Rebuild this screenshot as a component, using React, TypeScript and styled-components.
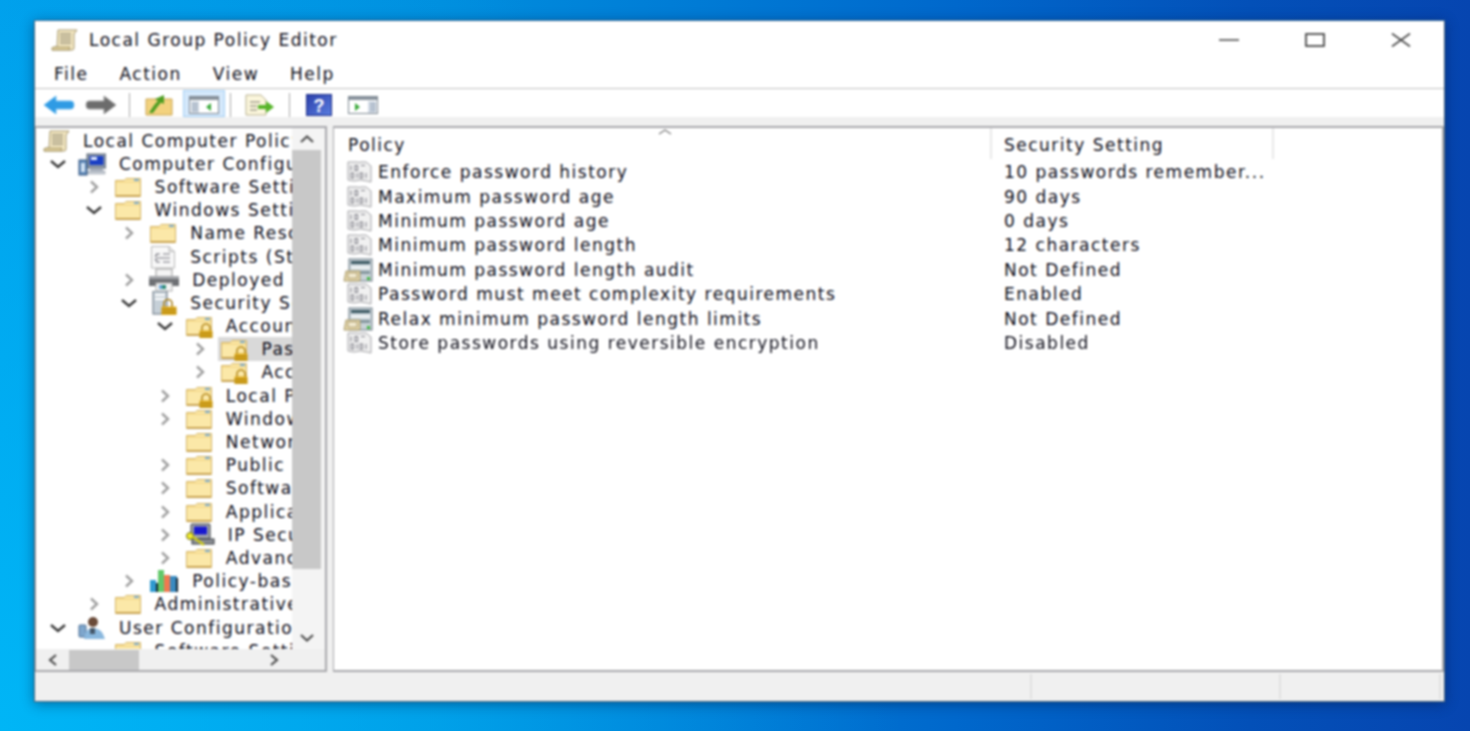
import React from 'react';
import styled, { createGlobalStyle } from 'styled-components';

const GlobalStyle = createGlobalStyle`
  html, body {
    margin: 0;
    padding: 0;
    overflow: hidden;
  }
  * {
    box-sizing: border-box;
  }
`;

const Desktop = styled.div`
  width: 1470px;
  height: 731px;
  padding: 20px 25px 29px 34px;
  background:
    radial-gradient(circle at 0 100%, rgba(0, 190, 250, 0.75), rgba(0, 190, 250, 0) 55%),
    linear-gradient(90deg, #009cea 0%, #008ede 30%, #0068cc 65%, #0350b8 85%, #0645b0 100%);
  font-family: 'DejaVu Sans', 'Noto Sans', sans-serif;
  color: #0c0c18;
`;

const Window = styled.div`
  width: 1411px;
  height: 682px;
  display: flex;
  flex-direction: column;
  background: #f0f0f0;
  border: 1px solid #4a6478;
  border-top-color: #3f6f96;
  box-shadow: 0 2px 12px rgba(0, 20, 60, 0.45);
  filter: blur(0.85px);
`;

const TitleBar = styled.div`
  height: 38px;
  flex: none;
  display: flex;
  align-items: center;
  padding-left: 15px;
  background: #fff;
`;

const TitleText = styled.span`
  margin-left: 11px;
  font-size: 17px;
  line-height: 20px;
  letter-spacing: 1.5px;
`;

const WindowControls = styled.div`
  margin-left: auto;
  display: flex;
  align-items: center;
  gap: 66px;
  padding-right: 33px;
`;

const MenuBar = styled.div`
  height: 30px;
  flex: none;
  display: flex;
  align-items: center;
  gap: 31px;
  padding: 0 0 0 19px;
  background: #fff;
  border-bottom: 1px solid #c0c0c0;
`;

const MenuItem = styled.span`
  font-size: 17px;
  line-height: 20px;
  letter-spacing: 1.5px;
`;

const Toolbar = styled.div`
  height: 28px;
  flex: none;
  display: flex;
  align-items: flex-end;
  padding-left: 6px;
  background: #fff;
`;

const ToolButton = styled.div<{ $w: number; $active?: boolean }>`
  width: ${(p) => p.$w}px;
  height: 27px;
  display: flex;
  align-items: center;
  justify-content: center;
  padding-top: 3px;
  background: ${(p) => (p.$active ? '#d4e8fb' : 'transparent')};
  border: 1px solid ${(p) => (p.$active ? '#a6d0f5' : 'transparent')};
`;

const ToolSep = styled.div`
  width: 1px;
  height: 24px;
  margin: 0 5px;
  background: #a8a8a8;
`;

const Band = styled.div`
  height: 9px;
  flex: none;
`;

const Panes = styled.div`
  flex: 1;
  min-height: 0;
  display: flex;
  gap: 6px;
`;

const TreePane = styled.div`
  width: 292px;
  flex: none;
  display: flex;
  flex-direction: column;
  background: #fff;
  border: 1px solid #a8a8ac;
  border-width: 2px 2px 2px 1px;
`;

const TreeBody = styled.div`
  flex: 1;
  min-height: 0;
  display: flex;
`;

const TreeClip = styled.div`
  width: 256px;
  flex: none;
  overflow: hidden;
  padding-top: 1px;
`;

const Row = styled.div<{ $depth: number }>`
  height: 23.2px;
  display: flex;
  align-items: center;
  white-space: nowrap;
  padding-left: ${(p) => (p.$depth < 0 ? 4 : 12 + p.$depth * 35.6)}px;
`;

const ChevronSlot = styled.div`
  width: 20px;
  margin-right: 8px;
  flex: none;
  display: flex;
  justify-content: center;
`;

const TreeItem = styled.div<{ $selected?: boolean }>`
  height: 24px;
  flex: none;
  display: flex;
  align-items: center;
  gap: 13px;
  padding-left: 2px;
  background: ${(p) => (p.$selected ? '#d9d9d9' : 'transparent')};

  svg {
    flex: none;
  }
`;

const TreeLabel = styled.span`
  font-size: 17px;
  line-height: 20px;
  letter-spacing: 1.5px;
`;

const VScroll = styled.div`
  flex: 1;
  display: flex;
  flex-direction: column;
  background: #f4f4f4;
  padding-right: 4px;
`;

const ScrollArrow = styled.div`
  height: 22px;
  width: 100%;
  flex: none;
  display: flex;
  align-items: center;
  justify-content: center;
`;

const VThumb = styled.div`
  height: 419px;
  flex: none;
  background: #c8c8c8;
`;

const VGap = styled.div`
  flex: 1;
  display: flex;
  align-items: flex-end;
`;

const HScroll = styled.div`
  height: 21px;
  flex: none;
  display: flex;
  align-items: center;
  background: #f0f0f0;
`;

const HArrow = styled.div`
  width: 33px;
  flex: none;
  display: flex;
  justify-content: center;
`;

const HThumb = styled.div`
  width: 70px;
  height: 20px;
  flex: none;
  background: #c8c8c8;
`;

const HGap = styled.div`
  width: 119px;
  flex: none;
`;

const ListPane = styled.div`
  flex: 1;
  min-width: 0;
  background: #fff;
  border: 1px solid #a8a8ac;
  border-width: 2px 2px 2px 1px;
`;

const HeaderRow = styled.div`
  height: 31px;
  display: grid;
  grid-template-columns: 658px 282px;
`;

const HeaderCell = styled.div<{ $pad: number }>`
  position: relative;
  display: flex;
  align-items: center;
  padding: 2px 0 0 ${(p) => p.$pad}px;
  font-size: 17px;
  line-height: 20px;
  letter-spacing: 1.5px;
  border-right: 2px solid #e8e8e8;
`;

const SortCaret = styled.svg`
  position: absolute;
  top: 1px;
  left: 324px;
`;

const ListBody = styled.div`
  display: flex;
  flex-direction: column;
  padding-top: 1px;
`;

const PolicyRow = styled.div`
  height: 24.4px;
  display: grid;
  grid-template-columns: 658px 1fr;
  align-items: center;
  font-size: 17px;
  line-height: 20px;
  letter-spacing: 1.5px;
  white-space: nowrap;
`;

const PolicyName = styled.div`
  display: flex;
  align-items: center;
  gap: 5px;
  padding-left: 9px;
`;

const PolicyIconSlot = styled.div`
  width: 30px;
  height: 24px;
  flex: none;
  display: flex;
  justify-content: flex-end;
`;

const PolicyValue = styled.div`
  padding-left: 12px;
`;

const StatusBar = styled.div`
  height: 29px;
  flex: none;
  display: flex;
  justify-content: flex-end;
  padding: 2px 3px 2px 0;
`;

const StatusCell = styled.div<{ $w: number }>`
  width: ${(p) => p.$w}px;
  border-left: 2px solid #e0e0e0;
`;

const Folder = ({ lock }: { lock?: boolean }) => (
  <svg width="28" height="24" viewBox="0 0 28 24">
    <path d="M1.5 5.5 V21.5 H26.5 V3.5 H12 L10 5.5 Z" fill="#fbe8a8" stroke="#d4b362" />
    <path d="M2 20 H26 V22 H2 Z" fill="#c9a453" />
    <path d="M2 6 H26 V8 H2 Z" fill="#f6dc92" />
    <rect x="20" y="4" width="5" height="2" fill="#7fb2d8" />
    {lock && (
      <g>
        <path d="M17 17 V14 a4 4 0 0 1 8 0 V17" fill="none" stroke="#b58a1e" strokeWidth="1.6" />
        <rect x="14.5" y="16.5" width="13" height="7.5" fill="#dba920" />
        <rect x="14.5" y="19" width="13" height="1" fill="#a8800f" />
        <rect x="14.5" y="22" width="13" height="1" fill="#a8800f" />
      </g>
    )}
  </svg>
);

const Scroll = () => (
  <svg width="28" height="24" viewBox="0 0 28 24">
    <path d="M8 2 H27 L24 6 V20 Q24 22 22 22 H2 Q4 21 4 19 H7 Z" fill="#f2e6c0" stroke="#a89a70" />
    <path d="M2 22 Q1 19 4 19 H20 Q18 21 20 22 Z" fill="#e3d29c" stroke="#a89a70" />
    <path d="M10 6 H21 M10 9 H21 M10 12 H21 M10 15 H21" stroke="#77705c" strokeWidth="1.2" />
  </svg>
);

const ComputerIcon = () => (
  <svg width="28" height="24" viewBox="0 0 28 24">
    <rect x="9" y="2" width="19" height="14" fill="#8c98a6" stroke="#5a6676" />
    <rect x="11.5" y="4" width="14" height="9" fill="#1a3fc4" />
    <rect x="13" y="5" width="6" height="3" fill="#e6eefc" />
    <rect x="12" y="16" width="13" height="3" fill="#a8b0bc" />
    <rect x="9" y="19" width="18" height="3" fill="#c6ccd4" stroke="#8a94a0" strokeWidth="0.5" />
    <rect x="1" y="8" width="8" height="15" fill="#5f88b8" stroke="#3a5a82" />
    <rect x="3" y="11" width="4" height="9" fill="#cfe0f2" />
  </svg>
);

const ScriptsIcon = () => (
  <svg width="28" height="24" viewBox="0 0 28 24">
    <path d="M2.5 1.5 H20 L25.5 6.5 V23 H2.5 Z" fill="#f8f8f8" stroke="#b8b8b8" />
    <path d="M20 1.5 V6.5 H25.5" fill="#e4e4e4" stroke="#b8b8b8" />
    <path d="M7 9 H11 M14 9 H21 M6 11.5 L8 9.5 M7 13 H21 M7 17 H11 M14 17 H21 M6 14 L8 16" stroke="#6e6e78" strokeWidth="1.1" fill="none" />
  </svg>
);

const PrinterIcon = () => (
  <svg width="30" height="24" viewBox="0 0 30 24">
    <rect x="7" y="1" width="16" height="8" fill="#f4f4f4" stroke="#9a9a9a" />
    <rect x="0" y="8" width="30" height="10" fill="#6e7074" />
    <rect x="0" y="8" width="30" height="3" fill="#a4a6aa" />
    <rect x="7" y="15" width="16" height="8" fill="#f4f4f4" stroke="#b0b0b0" />
    <rect x="13" y="17" width="4" height="4" fill="#2e8a78" />
    <rect x="10" y="17" width="3" height="4" fill="#6ca6d8" />
  </svg>
);

const SecurityIcon = () => (
  <svg width="28" height="24" viewBox="0 0 28 24">
    <rect x="4" y="0" width="14" height="23" fill="#c6d0d8" stroke="#66727e" />
    <rect x="6" y="3" width="10" height="2" fill="#fff" />
    <rect x="6" y="7" width="10" height="2" fill="#fff" />
    <path d="M15 16 V12.5 a4 4 0 0 1 8 0 V16" fill="none" stroke="#a8801c" strokeWidth="1.6" />
    <rect x="12.5" y="15.5" width="15" height="8.5" fill="#dba920" />
    <rect x="12.5" y="18" width="15" height="1" fill="#a8800f" />
    <rect x="12.5" y="21" width="15" height="1" fill="#a8800f" />
  </svg>
);

const IpSecIcon = () => (
  <svg width="30" height="24" viewBox="0 0 30 24">
    <rect x="6" y="1" width="19" height="15" rx="1" fill="#a0a4aa" stroke="#33363c" />
    <rect x="9" y="3.5" width="13" height="8" fill="#1818d0" />
    <rect x="7" y="16" width="22" height="5" fill="#8c9096" stroke="#33363c" />
    <circle cx="5" cy="13" r="3.5" fill="#f0ec30" stroke="#6e6a10" />
    <path d="M8 14 L19 22" stroke="#e8e420" strokeWidth="2.4" />
    <path d="M8 14 L19 22" stroke="#6e6a10" strokeWidth="0.5" />
  </svg>
);

const ChartIcon = () => (
  <svg width="30" height="24" viewBox="0 0 30 24">
    <rect x="1" y="11" width="6" height="12" fill="#2f9ad0" />
    <rect x="7" y="14" width="2" height="9" fill="#16262e" />
    <rect x="9" y="1" width="6" height="22" fill="#62c86a" />
    <rect x="15" y="6" width="6" height="17" fill="#f07a50" />
    <rect x="21" y="7" width="7" height="16" fill="#3a8ac0" />
    <rect x="27" y="9" width="2" height="14" fill="#142430" />
  </svg>
);

const UserIcon = () => (
  <svg width="28" height="24" viewBox="0 0 28 24">
    <rect x="1" y="9" width="7" height="12" rx="1" fill="#7ea6cc" stroke="#4c6f94" />
    <circle cx="15" cy="6" r="5" fill="#6a4a38" />
    <path d="M6 23 Q7 12 15 12 Q24 12 27 23 Z" fill="#8ab8de" />
    <rect x="12" y="12" width="5" height="6" fill="#45586a" />
  </svg>
);

const BinaryDoc = () => (
  <svg width="27" height="24" viewBox="0 0 27 24">
    <path d="M2 2 H11 Q13 3 15 2 H20 L25 6 V22 L21 21 Q14 19 8 21 L2 20 Z" fill="#f1f1f1" stroke="#a4a4a8" />
    <path d="M5 5.5 V10.5 M9 5.5 H11.5 V10.5 H9 Z M5 13 H7.5 V18 H5 Z M11 13 V18 M14 13 H16.5 V18 H14 Z M20 13 V18 M15 5.5 H19" fill="none" stroke="#84848c" strokeWidth="1.1" />
  </svg>
);

const ServerDoc = () => (
  <svg width="30" height="24" viewBox="0 0 30 24">
    <rect x="6" y="1" width="23" height="22" fill="#c8d2d8" stroke="#6c7a84" />
    <rect x="8" y="3" width="19" height="3" fill="#3d5a64" />
    <rect x="8" y="8" width="19" height="3" fill="#eef2f4" />
    <rect x="8" y="13" width="19" height="3" fill="#86989f" />
    <rect x="24" y="19" width="3" height="3" fill="#3fb83f" />
    <path d="M3 13 H17 V23 H1 Z" fill="#e4d6a8" stroke="#a89a70" />
    <rect x="5" y="15" width="9" height="5" fill="#f4ecd2" stroke="#b0a27a" />
  </svg>
);

const Chevron = ({ open, dark }: { open?: boolean; dark?: boolean }) =>
  open ? (
    <svg width="18" height="10" viewBox="0 0 18 10">
      <path d="M2 2 L9 8 L16 2" fill="none" stroke="#3a3a3a" strokeWidth="2.4" />
    </svg>
  ) : (
    <svg width="10" height="14" viewBox="0 0 10 14">
      <path d="M2 1.5 L8 7 L2 12.5" fill="none" stroke={dark ? '#3a3a3a' : '#a0a0a0'} strokeWidth="2.4" />
    </svg>
  );

const ScrollUp = () => (
  <svg width="14" height="8" viewBox="0 0 14 8">
    <path d="M1 7 L7 1.5 L13 7" fill="none" stroke="#505050" strokeWidth="2.2" />
  </svg>
);

const ScrollDown = () => (
  <svg width="14" height="8" viewBox="0 0 14 8">
    <path d="M1 1 L7 6.5 L13 1" fill="none" stroke="#505050" strokeWidth="2.2" />
  </svg>
);

const ScrollLeft = () => (
  <svg width="9" height="12" viewBox="0 0 9 12">
    <path d="M8 1 L2 6 L8 11" fill="none" stroke="#505050" strokeWidth="2.2" />
  </svg>
);

const ScrollRight = () => (
  <svg width="9" height="12" viewBox="0 0 9 12">
    <path d="M1 1 L7 6 L1 11" fill="none" stroke="#505050" strokeWidth="2.2" />
  </svg>
);

const BackArrow = () => (
  <svg width="32" height="20" viewBox="0 0 32 20">
    <path d="M1 10 L13 1 V6 H28 Q31 6 31 10 Q31 14 28 14 H13 V19 Z" fill="#2f9be4" stroke="#6fbcf0" />
  </svg>
);

const ForwardArrow = () => (
  <svg width="32" height="20" viewBox="0 0 32 20">
    <path d="M31 10 L19 1 V6 H4 Q1 6 1 10 Q1 14 4 14 H19 V19 Z" fill="#6c6c6c" stroke="#a0a0a0" />
  </svg>
);

const UpFolder = () => (
  <svg width="28" height="22" viewBox="0 0 28 22">
    <path d="M1 5 H27 V21 H1 Z" fill="#f3d27e" stroke="#c9a453" />
    <path d="M4 19 Q10 9 13 7 L10 5 L19 1 L19 10 L16 8.5 Q12 13 8 19 Z" fill="#4f9e22" />
  </svg>
);

const PaneIcon = ({ flip }: { flip?: boolean }) => (
  <svg width="30" height="18" viewBox="0 0 30 18">
    <rect x="0.5" y="0.5" width="29" height="17" fill="#fff" stroke="#7c8690" />
    <rect x="1" y="1" width="28" height="3" fill="#8a949e" />
    <rect x={flip ? 20 : 2} y="5" width="8" height="12" fill="#d4dce6" />
    <path d={flip ? 'M22 8 H28 M22 11 H28 M22 14 H28' : 'M3 8 H9 M3 11 H9 M3 14 H9'} stroke="#7c8ea4" strokeWidth="1" />
    <path d={flip ? 'M7 7 L12 11 L7 15 Z' : 'M22 7 L17 11 L22 15 Z'} fill="#3aa83a" />
  </svg>
);

const ExportIcon = () => (
  <svg width="30" height="22" viewBox="0 0 30 22">
    <path d="M1 1 H16 L21 6 V21 H1 Z" fill="#fbf6dc" stroke="#b8b090" />
    <path d="M5 8 H15 M5 12 H12 M5 16 H12" stroke="#787466" strokeWidth="1.2" />
    <path d="M13 11 H21 V7 L29 13 L21 19 V15 H13 Z" fill="#57b52a" />
  </svg>
);

const HelpIcon = () => (
  <svg width="26" height="22" viewBox="0 0 26 22">
    <defs>
      <linearGradient id="helpFill" x1="0" y1="0" x2="1" y2="1">
        <stop offset="0" stopColor="#2b3faa" />
        <stop offset="1" stopColor="#5a7ee0" />
      </linearGradient>
    </defs>
    <rect x="0.5" y="0.5" width="25" height="21" fill="url(#helpFill)" stroke="#1e2e86" />
    <text x="13" y="18" textAnchor="middle" fontSize="18" fontWeight="700" fontFamily="Liberation Sans, sans-serif" fill="#fff">
      ?
    </text>
  </svg>
);

const treeRows = [
  { depth: -1, icon: <Scroll />, label: 'Local Computer Policy' },
  { depth: 0, open: true, dark: true, icon: <ComputerIcon />, label: 'Computer Configuration' },
  { depth: 1, chevron: true, icon: <Folder />, label: 'Software Settings' },
  { depth: 1, open: true, icon: <Folder />, label: 'Windows Settings' },
  { depth: 2, chevron: true, icon: <Folder />, label: 'Name Resolution Policy' },
  { depth: 2, icon: <ScriptsIcon />, label: 'Scripts (Startup/Shutdown)' },
  { depth: 2, chevron: true, icon: <PrinterIcon />, label: 'Deployed Printers' },
  { depth: 2, open: true, icon: <SecurityIcon />, label: 'Security Settings' },
  { depth: 3, open: true, icon: <Folder lock />, label: 'Account Policies' },
  { depth: 4, chevron: true, selected: true, icon: <Folder lock />, label: 'Password Policy' },
  { depth: 4, chevron: true, icon: <Folder lock />, label: 'Account Lockout Policy' },
  { depth: 3, chevron: true, icon: <Folder lock />, label: 'Local Policies' },
  { depth: 3, chevron: true, icon: <Folder />, label: 'Windows Firewall' },
  { depth: 3, icon: <Folder />, label: 'Network List Manager' },
  { depth: 3, chevron: true, icon: <Folder />, label: 'Public Key Policies' },
  { depth: 3, chevron: true, icon: <Folder />, label: 'Software Restriction' },
  { depth: 3, chevron: true, icon: <Folder />, label: 'Application Control' },
  { depth: 3, chevron: true, icon: <IpSecIcon />, label: 'IP Security Policies' },
  { depth: 3, chevron: true, icon: <Folder />, label: 'Advanced Audit' },
  { depth: 2, chevron: true, icon: <ChartIcon />, label: 'Policy-based QoS' },
  { depth: 1, chevron: true, icon: <Folder />, label: 'Administrative Templates' },
  { depth: 0, open: true, dark: true, icon: <UserIcon />, label: 'User Configuration' },
  { depth: 1, icon: <Folder />, label: 'Software Settings' },
];

const policies = [
  { name: 'Enforce password history', value: '10 passwords remember...' },
  { name: 'Maximum password age', value: '90 days' },
  { name: 'Minimum password age', value: '0 days' },
  { name: 'Minimum password length', value: '12 characters' },
  { name: 'Minimum password length audit', value: 'Not Defined', server: true },
  { name: 'Password must meet complexity requirements', value: 'Enabled' },
  { name: 'Relax minimum password length limits', value: 'Not Defined', server: true },
  { name: 'Store passwords using reversible encryption', value: 'Disabled' },
];

const App = () => {
  return (
    <Desktop>
      <GlobalStyle />
      <Window>
        <TitleBar>
          <Scroll />
          <TitleText>Local Group Policy Editor</TitleText>
          <WindowControls>
            <svg width="20" height="14" viewBox="0 0 20 14">
              <path d="M0 7 H20" stroke="#444" strokeWidth="1.5" />
            </svg>
            <svg width="20" height="14" viewBox="0 0 20 14">
              <rect x="1" y="1" width="18" height="12" fill="none" stroke="#333" strokeWidth="1.6" />
            </svg>
            <svg width="20" height="14" viewBox="0 0 20 14">
              <path d="M1 0.5 L19 13.5 M19 0.5 L1 13.5" stroke="#444" strokeWidth="1.6" />
            </svg>
          </WindowControls>
        </TitleBar>
        <MenuBar>
          <MenuItem>File</MenuItem>
          <MenuItem>Action</MenuItem>
          <MenuItem>View</MenuItem>
          <MenuItem>Help</MenuItem>
        </MenuBar>
        <Toolbar>
          <ToolButton $w={36}><BackArrow /></ToolButton>
          <ToolButton $w={47}><ForwardArrow /></ToolButton>
          <ToolSep />
          <ToolButton $w={48}><UpFolder /></ToolButton>
          <ToolButton $w={42} $active><PaneIcon /></ToolButton>
          <ToolSep />
          <ToolButton $w={48}><ExportIcon /></ToolButton>
          <ToolSep />
          <ToolButton $w={47}><HelpIcon /></ToolButton>
          <ToolButton $w={42}><PaneIcon flip /></ToolButton>
        </Toolbar>
        <Band />
        <Panes>
          <TreePane>
            <TreeBody>
              <TreeClip>
                {treeRows.map((row, index) => (
                  <Row key={index} $depth={row.depth}>
                    {row.depth >= 0 && (
                      <ChevronSlot>
                        {(row.open || row.chevron) && <Chevron open={row.open} dark={row.dark} />}
                      </ChevronSlot>
                    )}
                    <TreeItem $selected={row.selected}>
                      {row.icon}
                      <TreeLabel>{row.label}</TreeLabel>
                    </TreeItem>
                  </Row>
                ))}
              </TreeClip>
              <VScroll>
                <ScrollArrow><ScrollUp /></ScrollArrow>
                <VThumb />
                <VGap>
                  <ScrollArrow><ScrollDown /></ScrollArrow>
                </VGap>
              </VScroll>
            </TreeBody>
            <HScroll>
              <HArrow><ScrollLeft /></HArrow>
              <HThumb />
              <HGap />
              <HArrow><ScrollRight /></HArrow>
            </HScroll>
          </TreePane>
          <ListPane>
            <HeaderRow>
              <HeaderCell $pad={14}>
                Policy
                <SortCaret width="14" height="6" viewBox="0 0 14 6">
                  <path d="M1 5 L7 1 L13 5" fill="none" stroke="#7a7a7a" strokeWidth="1.2" />
                </SortCaret>
              </HeaderCell>
              <HeaderCell $pad={12}>Security Setting</HeaderCell>
            </HeaderRow>
            <ListBody>
              {policies.map((policy) => (
                <PolicyRow key={policy.name}>
                  <PolicyName>
                    <PolicyIconSlot>{policy.server ? <ServerDoc /> : <BinaryDoc />}</PolicyIconSlot>
                    <span>{policy.name}</span>
                  </PolicyName>
                  <PolicyValue>{policy.value}</PolicyValue>
                </PolicyRow>
              ))}
            </ListBody>
          </ListPane>
        </Panes>
        <StatusBar>
          <StatusCell $w={249} />
          <StatusCell $w={160} />
          <StatusCell $w={2} />
        </StatusBar>
      </Window>
    </Desktop>
  );
};

export default App;
